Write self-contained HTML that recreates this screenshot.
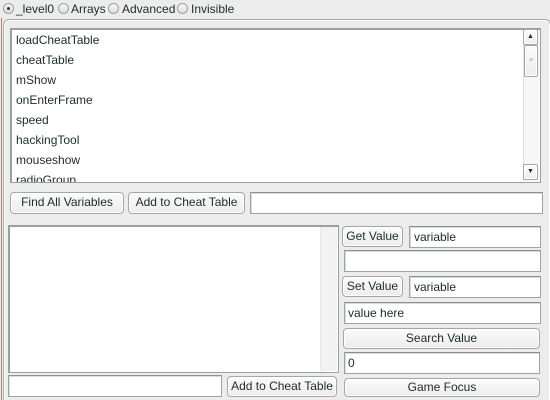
<!DOCTYPE html>
<html><head><style>
*{box-sizing:border-box;margin:0;padding:0}
html,body{width:550px;height:400px;overflow:hidden}
body{background:#ececec;position:relative;font-family:"Liberation Sans",sans-serif;font-size:12px;color:#1d2b2b}
.a{position:absolute}
.fld{position:absolute;background:#fff;border:1px solid #9ea3a3;border-top-color:#8a9090;box-shadow:inset 1px 1px 0 #d8dcdc;padding-left:4px;line-height:20px}
.btn{position:absolute;background:linear-gradient(#fbfbfb,#ececec);border:1px solid #a2a7a7;border-radius:4px;box-shadow:inset 0 0 0 1px #fff;text-align:center;line-height:19px}
.rad{position:absolute;top:3px;width:11px;height:11px;border-radius:50%;border:1px solid #9aa0a0;background:linear-gradient(#f8f8f8,#dcdcdc)}
.lbl{position:absolute;top:2px}
</style></head><body>
<div class="a" style="left:1px;top:18px;width:1px;height:382px;background:#b4826c"></div>
<div class="rad" style="left:3px"><div class="a" style="left:3px;top:3px;width:3px;height:3px;background:#333;border-radius:50%"></div></div>
<div class="lbl" style="left:16px">_level0</div>
<div class="rad" style="left:58px"></div><div class="lbl" style="left:71px">Arrays</div>
<div class="rad" style="left:108px"></div><div class="lbl" style="left:122px">Advanced</div>
<div class="rad" style="left:177px"></div><div class="lbl" style="left:191px">Invisible</div>
<div class="a" style="left:3px;top:19px;width:548px;height:395px;border:1px solid #a6abab;border-radius:6px;box-shadow:inset 0 0 0 1px #fff"></div>
<div class="a" style="left:10px;top:28px;width:531px;height:155px;background:#fff;border:1px solid #98a0a0;border-top-width:2px;border-left-width:2px;overflow:hidden">
<div class="a" style="left:4px;top:0px;line-height:20px">loadCheatTable<br>cheatTable<br>mShow<br>onEnterFrame<br>speed<br>hackingTool<br>mouseshow<br>radioGroup</div>
</div>
<div class="a" style="left:523px;top:30px;width:16px;height:151px;background:#f6f6f6;border-left:1px solid #e0e0e0"></div>
<div class="btn" style="left:523px;top:29px;width:15px;height:16px;border-radius:2px;font-size:7px;line-height:14px">▲</div>
<div class="btn" style="left:524px;top:45px;width:14px;height:32px;border-radius:2px;font-size:7px;line-height:30px;color:#aaa">≡</div>
<div class="btn" style="left:523px;top:164px;width:15px;height:16px;border-radius:2px;font-size:7px;line-height:14px">▼</div>
<div class="btn" style="left:10px;top:192px;width:114px;height:22px">Find All Variables</div>
<div class="btn" style="left:128px;top:192px;width:117px;height:22px">Add to Cheat Table</div>
<div class="fld" style="left:250px;top:192px;width:293px;height:22px"></div>
<div class="a" style="left:8px;top:225px;width:331px;height:148px;background:#fff;border:1px solid #98a0a0;border-top-width:2px;border-left-width:2px"></div>
<div class="a" style="left:320px;top:227px;width:17px;height:144px;background:#f2f2f2;border-left:1px solid #e6e6e6"></div>
<div class="fld" style="left:8px;top:375px;width:214px;height:22px"></div>
<div class="btn" style="left:227px;top:376px;width:110px;height:21px">Add to Cheat Table</div>
<div class="btn" style="left:342px;top:226px;width:61px;height:21px">Get Value</div>
<div class="fld" style="left:409px;top:226px;width:132px;height:22px">variable</div>
<div class="fld" style="left:344px;top:250px;width:197px;height:22px"></div>
<div class="btn" style="left:342px;top:276px;width:61px;height:21px">Set Value</div>
<div class="fld" style="left:409px;top:276px;width:132px;height:22px">variable</div>
<div class="fld" style="left:344px;top:302px;width:197px;height:22px;padding-left:3px">value here</div>
<div class="btn" style="left:343px;top:328px;width:197px;height:21px">Search Value</div>
<div class="fld" style="left:344px;top:352px;width:196px;height:22px;padding-left:3px">0</div>
<div class="btn" style="left:344px;top:378px;width:196px;height:19px;line-height:17px">Game Focus</div>
</body></html>
